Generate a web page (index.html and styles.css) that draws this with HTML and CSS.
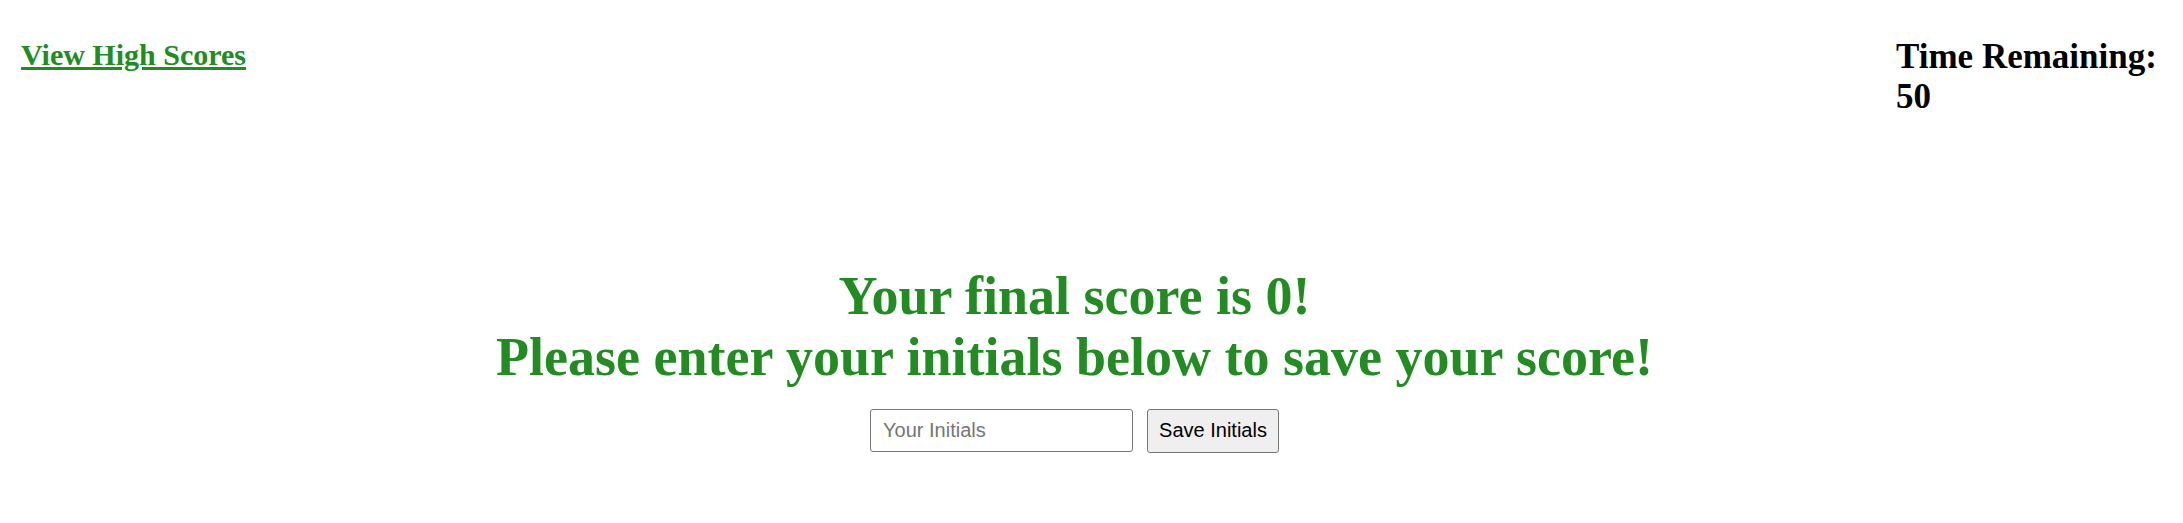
FILE: index.html
```html
<!DOCTYPE html>
<html lang="en">
<head>
<meta charset="utf-8">
<title>Quiz</title>
<link rel="stylesheet" href="styles.css">
</head>
<body>
<header class="topbar">
  <a class="scores-link" href="#">View High Scores</a>
  <div class="timer">Time Remaining: 50</div>
</header>
<main class="result">
  <h1 class="result-title">Your final score is 0!<br>Please enter your initials below to save your score!</h1>
  <form class="save-form">
    <input class="initials-input" type="text" placeholder="Your Initials">
    <button class="save-button" type="button">Save Initials</button>
  </form>
</main>
</body>
</html>
```
FILE: styles.css
```css
html, body {
  margin: 0;
  padding: 0;
  background: #ffffff;
}

body {
  font-family: "Liberation Serif", "Times New Roman", serif;
  color: #000;
}

.topbar {
  display: flex;
  justify-content: space-between;
  align-items: flex-start;
  padding: 37px 21px 0 21px;
}

.scores-link {
  font-size: 30px;
  font-weight: bold;
  color: #228b22;
  text-decoration: underline;
  line-height: 1.15;
  margin-top: 1px;
}

.timer {
  width: 266px;
  font-size: 35px;
  font-weight: bold;
  line-height: 1.15;
}

.result {
  display: flex;
  flex-direction: column;
  align-items: center;
  padding: 0 34px 0 0;
  margin-top: 148px;
}

.result-title {
  margin: 0;
  font-size: 54px;
  font-weight: bold;
  line-height: 61px;
  color: #228b22;
  text-align: center;
}

.save-form {
  display: flex;
  gap: 14px;
  margin-top: 21px;
}

.initials-input {
  box-sizing: border-box;
  width: 263px;
  height: 43px;
  padding: 0 12px;
  border: 1px solid #767676;
  border-radius: 3px;
  font-family: "Liberation Sans", Arial, sans-serif;
  font-size: 20px;
  color: #000;
  background: #fff;
}

.initials-input::placeholder {
  color: #757575;
}

.save-button {
  box-sizing: border-box;
  height: 44px;
  padding: 0 11px;
  border: 1px solid #767676;
  border-radius: 3px;
  background: #efefef;
  font-family: "Liberation Sans", Arial, sans-serif;
  font-size: 20px;
  color: #000;
}
```
